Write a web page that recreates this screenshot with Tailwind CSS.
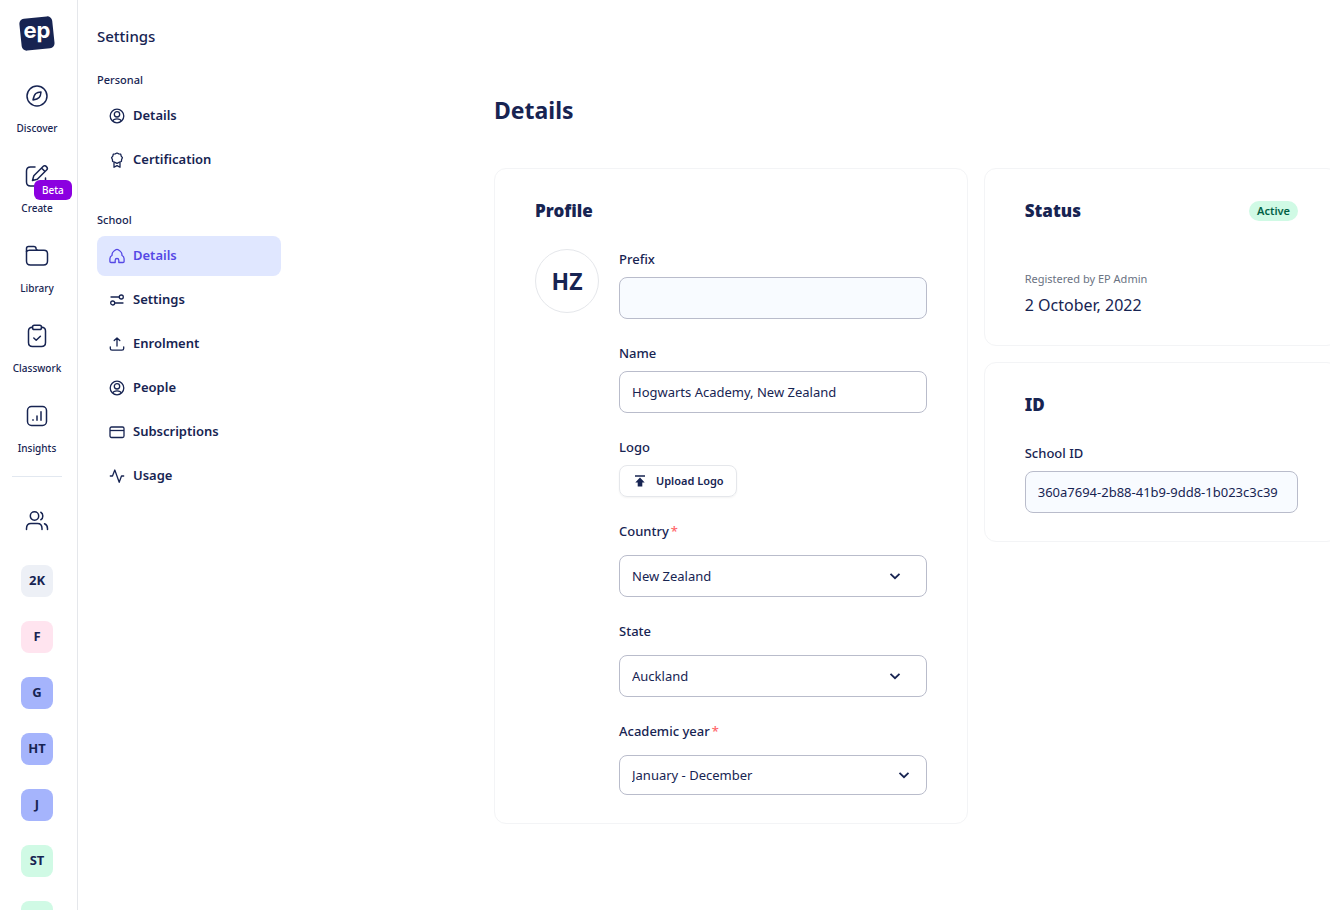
<!DOCTYPE html>
<html lang="en">
<head>
    <meta charset="UTF-8">
    <meta name="viewport" content="width=device-width, initial-scale=1.0">
    <title>School Details - Settings</title>
    <script src="https://cdn.jsdelivr.net/npm/@tailwindcss/browser@4"></script>
</head>
<body class="bg-white text-[#172452] font-['Noto_Sans',sans-serif]">

    <!-- Shared icons -->
    <svg class="hidden">
        <symbol id="icon-user" viewBox="0 0 16 16">
            <circle cx="8" cy="8" r="6.800"/>
            <circle cx="8" cy="6.300" r="2.700"/>
            <path d="M3.600 13c.6-1.600 1.900-2.200 4.400-2.200s3.800.6 4.400 2.200"/>
        </symbol>
        <symbol id="icon-chevron" viewBox="0 0 12 12">
            <path d="M1.500 3.800 6 8.200l4.500-4.400"/>
        </symbol>
    </svg>

    <div class="flex h-screen overflow-hidden">
        <!-- Main rail -->
        <aside class="flex w-[78px] shrink-0 flex-col items-center overflow-hidden border-r border-gray-200 pt-4 pr-[3px]">
            <a href="#" aria-label="Home" class="block shrink-0">
                <svg class="size-9" viewBox="0 0 36 36">
                    <rect x="1.500" y="1.500" width="33" height="32" rx="5" fill="#172452" transform="rotate(-6 18 18)"/>
                    <text x="18" y="22" text-anchor="middle" class="fill-white font-['Inter',sans-serif] text-[22px] font-bold">ep</text>
                </svg>
            </a>

            <nav class="mt-5 flex w-full shrink-0 flex-col text-[10px]/4 font-medium">
                <a href="#" class="flex h-20 flex-col items-center gap-3 pt-3">
                    <svg class="size-6 fill-none stroke-current stroke-[1.500]" viewBox="0 0 24 24" stroke-linecap="round" stroke-linejoin="round">
                        <circle cx="12" cy="12" r="10"/>
                        <path d="M16 8c-2.500.2-4 .6-5.200 1.500C9.400 10.700 8.700 12.500 8 16c3-.5 5-1.200 6.200-2.500C15.300 12.300 15.800 10.500 16 8z"/>
                    </svg>
                    Discover
                </a>
                <a href="#" class="relative flex h-20 flex-col items-center gap-3 pt-3">
                    <svg class="size-6 fill-none stroke-current stroke-[1.500]" viewBox="0 0 24 24" stroke-linecap="round" stroke-linejoin="round">
                        <path d="M10 3H5.500C3 3 1.500 4.300 1.500 7v11c0 2.700 1.500 4 4 4h11c2.600 0 4-1.300 4-4v-4"/>
                        <path d="M18.300 2.200 8.800 11.700 7.500 16.500l4.800-1.300 9.500-9.500c1.800-1.800-1.700-5.300-3.500-3.500zM16.500 4l3.500 3.500"/>
                    </svg>
                    Create
                    <span class="absolute top-7 left-[34px] rounded-md bg-[#8b00e0] px-2 text-[10px]/5 text-white">Beta</span>
                </a>
                <a href="#" class="flex h-20 flex-col items-center gap-3 pt-3">
                    <svg class="size-6 fill-none stroke-current stroke-[1.500]" viewBox="0 0 24 24" stroke-linecap="round" stroke-linejoin="round">
                        <path d="M1.500 7V4.500C1.500 3.300 2.300 2.500 3.500 2.500h5.200c1.200 0 2.300.8 2.300 2 0 .9.700 1.700 1.700 1.700h6.300c2.500 0 3.500 1.200 3.500 3.500v7.300c0 2.800-1.200 4-4 4h-13c-2.800 0-4-1.200-4-4V7z"/>
                        <path d="M1.500 7.500c.6-1 1.500-1.300 3-1.300h8"/>
                    </svg>
                    Library
                </a>
                <a href="#" class="flex h-20 flex-col items-center gap-3 pt-3">
                    <svg class="size-6 fill-none stroke-current stroke-[1.500]" viewBox="0 0 24 24" stroke-linecap="round" stroke-linejoin="round">
                        <path d="M7.500 3.200C4.700 3.200 3.500 4.500 3.500 7v11.500c0 2.800 1.200 4 4 4h9c2.800 0 4-1.200 4-4V7c0-2.500-1.200-3.800-4-3.800"/>
                        <rect x="7.500" y="1.300" width="9" height="4.200" rx="1.800"/>
                        <path d="m8.800 14 2.400 2.200 4.200-4"/>
                    </svg>
                    Classwork
                </a>
                <a href="#" class="flex h-20 flex-col items-center gap-3 pt-3">
                    <svg class="size-6 fill-none stroke-current stroke-[1.500]" viewBox="0 0 24 24" stroke-linecap="round" stroke-linejoin="round">
                        <rect x="2.500" y="2.500" width="19" height="19" rx="4"/>
                        <path d="M8 15.700v.6M12 12v4.300M16 7.800v8.500"/>
                    </svg>
                    Insights
                </a>
            </nav>

            <hr class="mt-1 w-[50px] shrink-0 border-slate-200">

            <a href="#" aria-label="Groups" class="mt-8 shrink-0">
                <svg class="size-6 fill-none stroke-current stroke-[1.500]" viewBox="0 0 24 24" stroke-linecap="round" stroke-linejoin="round">
                    <circle cx="9.500" cy="7" r="4.200"/>
                    <path d="M1.500 20.500v-1c0-3 1.700-5 4.500-5h6.500c2.800 0 4.500 2 4.500 5v1M15.800 3.200c2.700 1.200 2.700 6.400 0 7.600M19.500 14.800c2.200.8 3 2.500 3 4.700v1"/>
                </svg>
            </a>

            <div class="mt-8 flex flex-col gap-6 text-[13px] font-bold">
                <a href="#" class="flex size-8 items-center justify-center rounded-lg bg-[#edf0f6]">2K</a>
                <a href="#" class="flex size-8 items-center justify-center rounded-lg bg-[#ffe4ef]">F</a>
                <a href="#" class="flex size-8 items-center justify-center rounded-lg bg-[#a5b4fc]">G</a>
                <a href="#" class="flex size-8 items-center justify-center rounded-lg bg-[#a5b4fc]">HT</a>
                <a href="#" class="flex size-8 items-center justify-center rounded-lg bg-[#a5b4fc]">J</a>
                <a href="#" class="flex size-8 items-center justify-center rounded-lg bg-emerald-100">ST</a>
                <a href="#" aria-label="Class" class="flex size-8 items-center justify-center rounded-lg bg-emerald-100"></a>
            </div>
        </aside>

        <!-- Settings menu -->
        <aside class="w-56 shrink-0 pt-6 pr-[21px] pl-[19px]">
            <h2 class="text-[15px]/6 font-medium">Settings</h2>

            <h3 class="mt-6 text-[11px]/4 font-medium">Personal</h3>
            <nav class="mt-2 flex flex-col gap-1 text-[13px] font-semibold">
                <a href="#" class="flex h-10 items-center gap-2 rounded-lg px-3">
                    <svg class="size-4 fill-none stroke-current stroke-[1.300]"><use href="#icon-user"/></svg>
                    Details
                </a>
                <a href="#" class="flex h-10 items-center gap-2 rounded-lg px-3">
                    <svg class="size-4 fill-none stroke-current stroke-[1.300]" viewBox="0 0 16 16" stroke-linejoin="round">
                        <path d="m8 1 1.800.8 1.900.4.500 1.900 1.200 1.600-.8 1.800-.2 2-1.900.7L8 11.300l-2.500-1.100-1.900-.7-.2-2-.8-1.800 1.200-1.600.5-1.900 1.900-.4z"/>
                        <path d="M5 10.300v5l3-1.700 3 1.700v-5"/>
                    </svg>
                    Certification
                </a>
            </nav>

            <h3 class="mt-8 text-[11px]/4 font-medium">School</h3>
            <nav class="mt-2 flex flex-col gap-1 text-[13px] font-semibold">
                <a href="#" aria-current="page" class="flex h-10 items-center gap-2 rounded-lg bg-indigo-100 px-3 text-[#5548e5]">
                    <svg class="size-4 fill-none stroke-current stroke-[1.300]" viewBox="0 0 16 16" stroke-linejoin="round">
                        <path d="M2 14.500h4.200v-2.300c0-1.200.6-1.700 1.800-1.700s1.800.5 1.800 1.700v2.300H14c.7 0 1.100-.4 1.100-1.100v-2.700c0-1.300-.7-2.400-2.200-3.400V6C12.900 4.500 9.800 1.400 8 1.400S3.100 4.500 3.100 6v1.300C1.600 8.300.9 9.400.9 10.700v2.700c0 .7.4 1.100 1.100 1.100z"/>
                    </svg>
                    Details
                </a>
                <a href="#" class="flex h-10 items-center gap-2 rounded-lg px-3">
                    <svg class="size-4 fill-none stroke-current stroke-[1.300]" viewBox="0 0 16 16" stroke-linecap="round">
                        <circle cx="12.300" cy="5" r="2"/>
                        <circle cx="3.700" cy="11" r="2"/>
                        <path d="M2 5h8M6 11h8"/>
                    </svg>
                    Settings
                </a>
                <a href="#" class="flex h-10 items-center gap-2 rounded-lg px-3">
                    <svg class="size-4 fill-none stroke-current stroke-[1.300]" viewBox="0 0 16 16" stroke-linecap="round" stroke-linejoin="round">
                        <path d="M8 10V2.300M5.200 4.500 8 1.900l2.800 2.600M1.300 10.800v1.700c0 1.100.7 1.700 1.700 1.700h10c1 0 1.700-.6 1.700-1.700v-1.700"/>
                    </svg>
                    Enrolment
                </a>
                <a href="#" class="flex h-10 items-center gap-2 rounded-lg px-3">
                    <svg class="size-4 fill-none stroke-current stroke-[1.300]"><use href="#icon-user"/></svg>
                    People
                </a>
                <a href="#" class="flex h-10 items-center gap-2 rounded-lg px-3">
                    <svg class="size-4 fill-none stroke-current stroke-[1.300]" viewBox="0 0 16 16">
                        <rect x="1" y="3" width="14" height="10.500" rx="1.500"/>
                        <path d="M1 6.500h14"/>
                    </svg>
                    Subscriptions
                </a>
                <a href="#" class="flex h-10 items-center gap-2 rounded-lg px-3">
                    <svg class="size-4 fill-none stroke-current stroke-[1.300]" viewBox="0 0 16 16" stroke-linecap="round" stroke-linejoin="round">
                        <path d="M1.300 8h2.200L5.800 2l4.400 12.300L12.500 8h2.200"/>
                    </svg>
                    Usage
                </a>
            </nav>
        </aside>

        <!-- Page content -->
        <main class="min-w-0 flex-1 overflow-hidden pt-24 pl-48">
            <div class="min-w-[845px]">
                <h1 class="text-[23px]/7 font-bold">Details</h1>

                <div class="mt-11 grid grid-cols-[4fr_3fr] items-start gap-4">
                    <section class="rounded-xl border border-gray-100 px-10 py-7">
                        <h2 class="text-[17px]/7 font-black">Profile</h2>
                        <form class="mt-6 flex gap-5">
                            <div class="flex size-16 shrink-0 items-center justify-center rounded-full border border-gray-200 text-[23px] font-bold">HZ</div>
                            <div class="flex min-w-0 flex-1 flex-col gap-6 text-[13px]/5">
                                <div class="flex flex-col gap-2">
                                    <label for="prefix" class="font-medium">Prefix</label>
                                    <input id="prefix" type="text" class="h-[42px] w-full rounded-lg border border-[#b9bccb] bg-[#f8fbff] px-3">
                                </div>
                                <div class="flex flex-col gap-2">
                                    <label for="name" class="font-medium">Name</label>
                                    <input id="name" type="text" value="Hogwarts Academy, New Zealand" class="h-[42px] w-full rounded-lg border border-[#b9bccb] px-3">
                                </div>
                                <div class="flex flex-col items-start gap-2">
                                    <span class="font-medium">Logo</span>
                                    <button type="button" class="flex h-8 items-center gap-2 rounded-lg border border-gray-200 px-3 text-[11px] font-semibold shadow-xs">
                                        <svg class="size-4 fill-current" viewBox="0 0 16 16">
                                            <path d="M3 2.300h10v1.400H3zM8 4.500 12.700 9.400H10.300V13.500H5.700V9.400H3.300z"/>
                                        </svg>
                                        Upload Logo
                                    </button>
                                </div>
                                <div class="flex flex-col gap-[14px]">
                                    <label for="country" class="font-medium">Country<span class="ml-0.5 text-red-400">*</span></label>
                                    <div class="relative">
                                        <select id="country" class="h-[42px] w-full appearance-none rounded-lg border border-[#b9bccb] px-3">
                                            <option>New Zealand</option>
                                        </select>
                                        <svg class="pointer-events-none absolute top-[15px] right-[26px] size-3 fill-none stroke-current stroke-[1.800]"><use href="#icon-chevron"/></svg>
                                    </div>
                                </div>
                                <div class="flex flex-col gap-[14px]">
                                    <label for="state" class="font-medium">State</label>
                                    <div class="relative">
                                        <select id="state" class="h-[42px] w-full appearance-none rounded-lg border border-[#b9bccb] px-3">
                                            <option>Auckland</option>
                                        </select>
                                        <svg class="pointer-events-none absolute top-[15px] right-[26px] size-3 fill-none stroke-current stroke-[1.800]"><use href="#icon-chevron"/></svg>
                                    </div>
                                </div>
                                <div class="flex flex-col gap-[14px]">
                                    <label for="academic-year" class="font-medium">Academic year<span class="ml-0.5 text-red-400">*</span></label>
                                    <div class="relative">
                                        <select id="academic-year" class="h-10 w-full appearance-none rounded-lg border border-[#b9bccb] px-3">
                                            <option>January - December</option>
                                        </select>
                                        <svg class="pointer-events-none absolute top-[14px] right-[17px] size-3 fill-none stroke-current stroke-[1.800]"><use href="#icon-chevron"/></svg>
                                    </div>
                                </div>
                            </div>
                        </form>
                    </section>

                    <div class="flex min-w-0 flex-col gap-4">
                        <section class="rounded-xl border border-gray-100 px-10 py-7">
                            <div class="flex items-center justify-between">
                                <h2 class="text-[17px]/7 font-black">Status</h2>
                                <span class="rounded-full bg-emerald-100 px-2 text-[11px]/5 font-semibold text-emerald-800">Active</span>
                            </div>
                            <p class="mt-11 text-[11px]/5 text-gray-500">Registered by EP Admin</p>
                            <p class="mt-1 text-base/6">2 October, 2022</p>
                        </section>

                        <section class="rounded-xl border border-gray-100 px-10 py-7">
                            <h2 class="text-[17px]/7 font-black">ID</h2>
                            <div class="mt-6 flex flex-col gap-2 text-[13px]/5">
                                <label for="school-id" class="font-medium">School ID</label>
                                <input id="school-id" type="text" readonly value="360a7694-2b88-41b9-9dd8-1b023c3c39" class="h-[42px] w-full rounded-lg border border-[#b9bccb] bg-[#f8fbff] px-3">
                            </div>
                        </section>
                    </div>
                </div>
            </div>
        </main>
    </div>
</body>
</html>
